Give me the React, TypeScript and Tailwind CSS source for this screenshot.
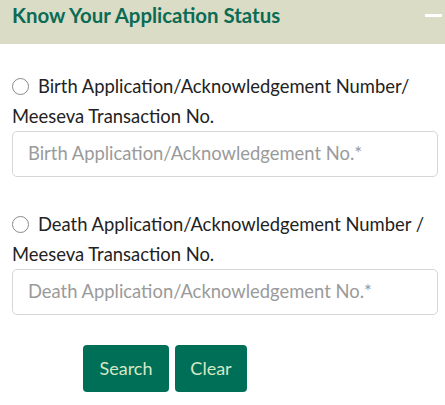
import React from "react";

function Radio() {
  return (
    <span className="inline-block w-[17px] h-[17px] rounded-full border border-[#8a8a8a] bg-white align-middle mr-[9px] relative top-[-2px]" />
  );
}

export default function App() {
  const font = { fontFamily: "Lato, 'Open Sans', sans-serif" };
  return (
    <div className="w-[445px] h-[405px] bg-white" style={font}>
      <div className="h-[44px] bg-[#dadcc5] flex items-start justify-between pl-[12px] pr-[3px] pt-[2px]">
        <span className="text-[20.4px] font-bold leading-[26px] text-[#0b6b55]">Know Your Application Status</span>
        <span className="mt-[12px] block w-[17px] h-[3px] bg-white" />
      </div>
      <div className="px-[12px]">
        <div className="mt-[27px] text-[18.4px] leading-[30px] text-[#222]">
          <Radio />
          Birth Application/Acknowledgement Number/ Meeseva Transaction No.
        </div>
        <div className="h-[46px] w-[426px] border border-[#d6d6d6] rounded-[5px] flex items-center pl-[15px] text-[18.4px] text-[#9a9a9a]">
          Birth Application/Acknowledgement No.*
        </div>
        <div className="mt-[32px] text-[18.4px] leading-[30px] text-[#222]">
          <Radio />
          Death Application/Acknowledgement Number / Meeseva Transaction No.
        </div>
        <div className="h-[46px] w-[426px] border border-[#d6d6d6] rounded-[5px] flex items-center pl-[15px] text-[18.4px] text-[#9a9a9a]">
          Death Application/Acknowledgement No.*
        </div>
        <div className="mt-[30px] ml-[71px] flex gap-[6px]">
          <button className="w-[86px] h-[47px] rounded-[4px] bg-[#006f58] text-[#d5e8c4] text-[18px]">Search</button>
          <button className="w-[72px] h-[47px] rounded-[4px] bg-[#006f58] text-[#d5e8c4] text-[18px]">Clear</button>
        </div>
      </div>
    </div>
  );
}
